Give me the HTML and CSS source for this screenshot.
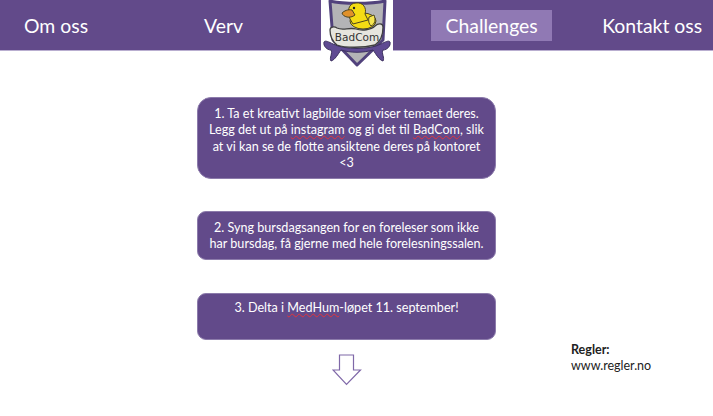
FILE: index.html
```html
<!DOCTYPE html>
<html lang="en">
<head>
    <meta charset="UTF-8" />
    <title>BadCom - Challenges</title>
    <link rel="stylesheet" href="styles.css">
</head>
<body>
    <nav class="topbar">
        <a class="nav-link nav-om">Om oss</a>
        <a class="nav-link nav-verv">Verv</a>
        <a class="nav-link nav-active">Challenges</a>
        <a class="nav-link nav-kontakt">Kontakt oss</a>
    </nav>

    <div class="logo">
        <svg width="72" height="68" viewBox="0 0 72 68">
            <!-- shield -->
            <path d="M9 1 C20 4 52 4 64 1 L62 40 L36 65 L12 40 Z" fill="#b4b4b6" stroke="#51427c" stroke-width="3" stroke-linejoin="round"/>
            <!-- duck -->
            <ellipse cx="42" cy="21" rx="13" ry="8" fill="#f4dc14" stroke="#4b4420"/>
            <path d="M29 19 C26 12 27 3 35 3 C42 2 46 8 44 14 L47 20 L32 24 Z" fill="#f4dc14" stroke="#4b4420"/>
            <circle cx="33" cy="8" r="1.2" fill="#222"/>
            <path d="M31 10 C27 9 23 11 21 13 C22 17 29 19 34 15 Z" fill="#e0912a" stroke="#4b4420"/>
            <path d="M48 17 L53 15 C55 20 54 24 50 26 C48 24 47 21 48 17 Z" fill="#f6e651" stroke="#4b4420"/>
            <!-- feet and banner -->
            <path d="M3 42 C4 40 8 42 12 44 C24 50 48 50 60 44 C64 42 68 40 69 42 C70 46 66 50 62 50 C60 53 64 58 62 61 C58 60 55 54 52 50 C42 53 30 53 20 50 C17 54 14 60 10 61 C8 58 12 53 10 50 C6 50 2 46 3 42 Z" fill="#5f4a92" stroke="#3b2f5e"/>
            <!-- tub -->
            <path d="M9 30 C9 27 13 26 16 28 C22 31 28 27 35 29 C41 31 50 30 54 26 C57 23 62 23 62 27 C62 35 60 41 54 45 C42 48 24 48 16 45 C11 41 9 36 9 30 Z" fill="#e6e5de" stroke="#3f3f3f" stroke-width="1.3"/>
            <text class="logo-text" x="36" y="41" text-anchor="middle">BadCom</text>
        </svg>
    </div>

    <main class="content">
        <section class="steps">
            <div class="step step-first">
                1. Ta et kreativt lagbilde som viser temaet deres. Legg det ut på <span class="typo">instagram</span> og gi det til <span class="typo">BadCom</span>, slik at vi kan se de flotte ansiktene deres på kontoret &lt;3
            </div>
            <div class="step step-second">
                2. Syng bursdagsangen for en foreleser som ikke har bursdag, få gjerne med hele forelesningssalen.
            </div>
            <div class="step step-third">
                3. Delta i <span class="typo">MedHum</span>-løpet 11. september!
            </div>
            <svg class="arrow" width="30" height="32" viewBox="0 0 30 32">
                <path d="M7.5 1 H21.5 V16 H28.5 L14.5 30.5 L1 16 H7.5 Z" fill="#fff" stroke="#7f68a8" stroke-width="1.2"/>
            </svg>
        </section>
        <aside class="rules">
            <strong>Regler:</strong><br>
            www.regler.no
        </aside>
    </main>
</body>
</html>
```

FILE: styles.css
```css
html, body {
    height: 100%;
}

body {
    margin: 0;
    background: #fff;
    font-family: Lato, 'Open Sans', sans-serif;
    overflow: hidden;
}

.topbar {
    display: flex;
    align-items: center;
    height: 50px;
    background-color: #624a8a;
    border-bottom: 1px solid #b9aed0;
    color: #fff;
    font-size: 19.4px;
    white-space: nowrap;
}

.nav-link {
    display: block;
    line-height: 31px;
}

.nav-om {
    margin-left: 24px;
}

.nav-verv {
    margin-left: 116px;
}

.nav-active {
    margin-left: 188px;
    padding: 0 14.5px;
    background-color: #9079b4;
}

.nav-kontakt {
    margin-left: 50px;
}

/* sits over the bar */
.logo {
    position: absolute;
    top: 0;
    left: 321px;
    width: 72px;
    height: 68px;
    background: linear-gradient(#fff, #fff) no-repeat top / 100% 51px;
}

.logo svg {
    display: block;
}

.logo-text {
    font-family: 'DejaVu Sans', sans-serif;
    font-size: 10.5px;
    fill: #333;
}

.content {
    display: flex;
    padding-left: 197px;
}

.steps {
    display: flex;
    flex-direction: column;
    width: 299px;
    padding-top: 46px;
}

.step {
    box-sizing: border-box;
    background-color: #624a8a;
    border: 1px solid #8c7bab;
    color: #fff;
    font-size: 12.6px;
    line-height: 16.3px;
    text-align: center;
    padding: 8px 8px;
}

.step-first {
    height: 82px;
    border-radius: 14px;
}

.step-second {
    height: 49px;
    margin-top: 32px;
    border-radius: 9px;
}

.step-third {
    height: 47px;
    margin-top: 33px;
    padding-top: 6px;
    border-radius: 9px;
}

.typo {
    text-decoration: underline wavy #e0343c 1px;
    text-decoration-skip-ink: none;
    text-underline-offset: 1px;
}

.arrow {
    align-self: center;
    margin-top: 14px;
}

.rules {
    align-self: flex-end;
    margin-left: 75px;
    margin-bottom: 12px;
    color: #222;
    font-size: 12.5px;
    line-height: 16px;
}
```
